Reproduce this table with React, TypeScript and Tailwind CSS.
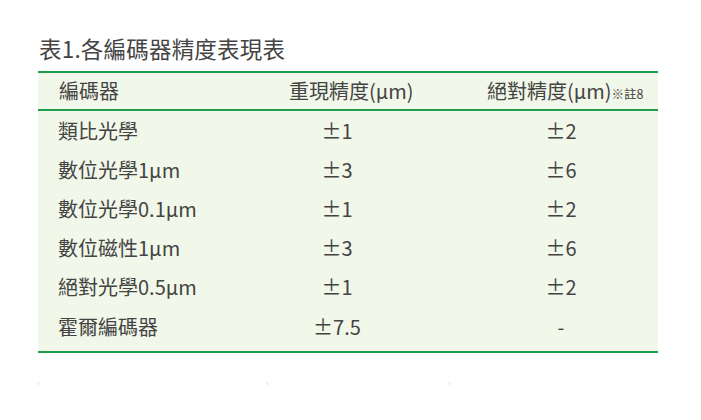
const rows: [string, string, string][] = [
  ["類比光學", "±1", "±2"],
  ["數位光學1μm", "±3", "±6"],
  ["數位光學0.1μm", "±1", "±2"],
  ["數位磁性1μm", "±3", "±6"],
  ["絕對光學0.5μm", "±1", "±2"],
  ["霍爾編碼器", "±7.5", "-"],
];

const font = { fontFamily: '"Noto Sans CJK TC", "Noto Sans", sans-serif' };

export default function App() {
  return (
    <main className="min-h-screen w-[701px] bg-white text-[#444]" style={font}>
      <div className="pl-[38px] pt-[33px] w-[658px]">
        <h1 className="text-[22.5px] leading-[30px] pl-[1px] text-[#444] tracking-[0.2px]">
          表1.各編碼器精度表現表
        </h1>

        <div className="mt-[8px] w-[620px] bg-[#f1f7e9] border-t-2 border-b-2 border-[#1e9d4c] text-[20px]">
          <div className="grid grid-cols-[229px_182px_209px] h-[38px] items-center border-b-2 border-[#1e9d4c]">
            <div className="pl-[21px]">編碼器</div>
            <div className="pl-[22px]">重現精度(μm)</div>
            <div className="pl-[38px] whitespace-nowrap">
              絕對精度(μm)<span className="text-[12.5px]">※註8</span>
            </div>
          </div>
          <div className="pb-[5px]">
            {rows.map(([name, rep, abs]) => (
              <div
                key={name}
                className="grid grid-cols-[229px_182px_209px] h-[39.2px] items-center"
              >
                <div className="pl-[20px]">{name}</div>
                <div className="text-center pr-[42px]">{rep}</div>
                <div className="text-center pl-[15px]">{abs}</div>
              </div>
            ))}
          </div>
        </div>

        <div className="mt-[29px] grid grid-cols-[229px_182px_209px] w-[620px]">
          <div className="h-[3px] border-l border-[#ddd]" />
          <div className="h-[3px] border-l border-[#ddd]" />
          <div className="h-[3px] border-l border-[#ddd]" />
        </div>
      </div>
    </main>
  );
}
